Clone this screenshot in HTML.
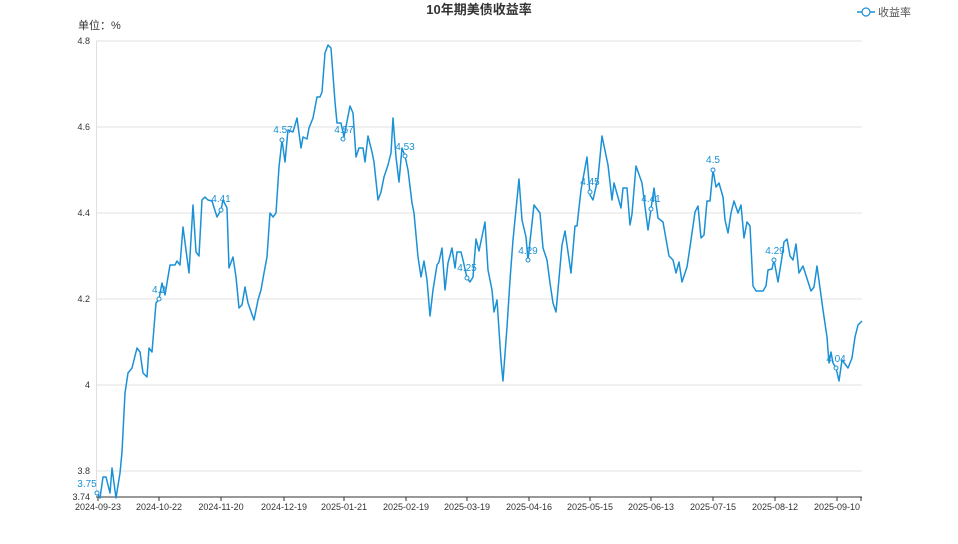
<!DOCTYPE html>
<html><head><meta charset="utf-8"><style>
body{margin:0;background:#fff;width:958px;height:539px;overflow:hidden}
svg text{font-family:"Liberation Sans","Noto Sans CJK SC",sans-serif}
</style></head><body>
<svg width="958" height="539" viewBox="0 0 958 539" xmlns="http://www.w3.org/2000/svg">
<text x="479" y="14" text-anchor="middle" font-size="13" font-weight="bold" fill="#333">10年期美债收益率</text>
<line x1="857" y1="12" x2="875" y2="12" stroke="#1a91d6" stroke-width="1.5"/>
<circle cx="866" cy="12" r="4" fill="#fff" stroke="#1a91d6" stroke-width="1.2"/>
<text x="878" y="16" font-size="11" fill="#555">收益率</text>
<text x="78" y="29" font-size="11" fill="#333">单位：%</text>
<g stroke="#e0e0e0" stroke-width="1">
<line x1="96" y1="41" x2="862" y2="41"/><line x1="96" y1="127" x2="862" y2="127"/>
<line x1="96" y1="213" x2="862" y2="213"/><line x1="96" y1="299" x2="862" y2="299"/>
<line x1="96" y1="385" x2="862" y2="385"/><line x1="96" y1="471" x2="862" y2="471"/>
<line x1="96.5" y1="41" x2="96.5" y2="497"/>
</g>
<line x1="96" y1="497" x2="862" y2="497" stroke="#333" stroke-width="1"/>
<g font-size="9" fill="#333" text-anchor="end">
<text x="90" y="44">4.8</text><text x="90" y="130">4.6</text><text x="90" y="216">4.4</text>
<text x="90" y="302">4.2</text><text x="90" y="388">4</text><text x="90" y="474">3.8</text><text x="90" y="500">3.74</text>
</g>
<g stroke="#333" stroke-width="1">
<line x1="98" y1="497" x2="98" y2="501"/><line x1="159" y1="497" x2="159" y2="501"/><line x1="221" y1="497" x2="221" y2="501"/><line x1="284" y1="497" x2="284" y2="501"/><line x1="344" y1="497" x2="344" y2="501"/><line x1="406" y1="497" x2="406" y2="501"/><line x1="467" y1="497" x2="467" y2="501"/><line x1="529" y1="497" x2="529" y2="501"/><line x1="590" y1="497" x2="590" y2="501"/><line x1="651" y1="497" x2="651" y2="501"/><line x1="713" y1="497" x2="713" y2="501"/><line x1="775" y1="497" x2="775" y2="501"/><line x1="837" y1="497" x2="837" y2="501"/><line x1="861" y1="497" x2="861" y2="501"/>
</g>
<g font-size="9" fill="#333" text-anchor="middle">
<text x="98" y="510">2024-09-23</text><text x="159" y="510">2024-10-22</text><text x="221" y="510">2024-11-20</text><text x="284" y="510">2024-12-19</text><text x="344" y="510">2025-01-21</text><text x="406" y="510">2025-02-19</text><text x="467" y="510">2025-03-19</text><text x="529" y="510">2025-04-16</text><text x="590" y="510">2025-05-15</text><text x="651" y="510">2025-06-13</text><text x="713" y="510">2025-07-15</text><text x="775" y="510">2025-08-12</text><text x="837" y="510">2025-09-10</text>
</g>
<polyline fill="none" stroke="#1a91d6" stroke-width="1.5" stroke-linejoin="round" points="97,493 100,498 103,477 106,477 110,493 112,468 116,498 120,473 122,452 125,393 128,373 132,368 134,360 137,348 140,352 143,373 147,377 149,348 152,352 156,303 159,299 162,283 165,295 170,265 175,265 177,261 180,265 183,227 189,273 193,205 196,252 199,256 202,200 205,197 208,200 212,201 217,217 221,210 223,200 227,208 229,268 233,257 236,277 239,308 242,305 245,287 248,303 254,320 258,300 261,290 264,273 267,257 270,213 273,217 276,213 279,167 282,140 285,162 288,130 293,132 297,118 301,148 303,137 307,139 309,128 313,118 317,97 320,97 322,92 325,53 328,45 331,48 335,102 337,123 341,123 344,137 350,106 353,113 356,157 359,148 363,148 365,162 368,136 372,152 374,162 378,200 381,192 384,177 388,165 391,153 393,118 396,157 399,182 402,148 405,156 408,170 412,203 414,213 418,257 421,277 424,261 427,280 430,316 433,290 437,265 439,262 442,248 445,290 448,263 452,248 455,268 457,252 461,252 463,260 467,278 470,282 473,277 476,239 479,251 485,222 488,270 492,290 494,312 497,300 501,360 503,381 507,327 510,280 513,240 519,179 522,220 526,237 528,260 534,205 540,213 543,248 547,260 550,283 553,303 556,312 562,245 565,231 571,273 575,226 577,226 581,190 587,157 590,195 593,200 598,178 602,136 608,165 612,200 614,183 621,208 623,188 627,188 630,225 632,214 636,166 642,183 648,230 654,188 658,218 663,222 669,256 673,260 676,273 679,262 682,282 687,267 690,247 695,212 698,206 701,238 704,235 707,201 710,201 713,170 716,187 719,183 723,197 725,220 728,233 731,213 734,201 738,213 741,205 744,238 747,222 750,226 753,286 756,291 763,291 766,286 768,270 772,269 774,260 778,282 782,257 784,242 787,239 790,256 793,260 796,244 799,273 803,266 811,291 814,287 817,266 823,310 827,337 829,363 831,352 833,363 836,368 839,381 842,360 848,368 852,358 855,337 858,325 862,321"/>
<g fill="#fff" stroke="#1a91d6" stroke-width="1">
<circle cx="97" cy="493" r="2"/><circle cx="159" cy="299" r="2"/><circle cx="221" cy="210" r="2"/><circle cx="282" cy="140" r="2"/><circle cx="343" cy="139" r="2"/><circle cx="405" cy="156" r="2"/><circle cx="467" cy="278" r="2"/><circle cx="528" cy="260" r="2"/><circle cx="590" cy="192" r="2"/><circle cx="651" cy="209" r="2"/><circle cx="713" cy="170" r="2"/><circle cx="774" cy="260" r="2"/><circle cx="836" cy="368" r="2"/>
</g>
<g font-size="10" fill="#1a91d6" text-anchor="middle">
<text x="87" y="487">3.75</text><text x="159" y="293">4.2</text><text x="221" y="202">4.41</text><text x="283" y="133">4.57</text><text x="344" y="133">4.57</text><text x="405" y="150">4.53</text><text x="467" y="271">4.25</text><text x="528" y="254">4.29</text><text x="590" y="185">4.45</text><text x="651" y="202">4.41</text><text x="713" y="163">4.5</text><text x="775" y="254">4.29</text><text x="836" y="362">4.04</text>
</g>
</svg>
</body></html>
